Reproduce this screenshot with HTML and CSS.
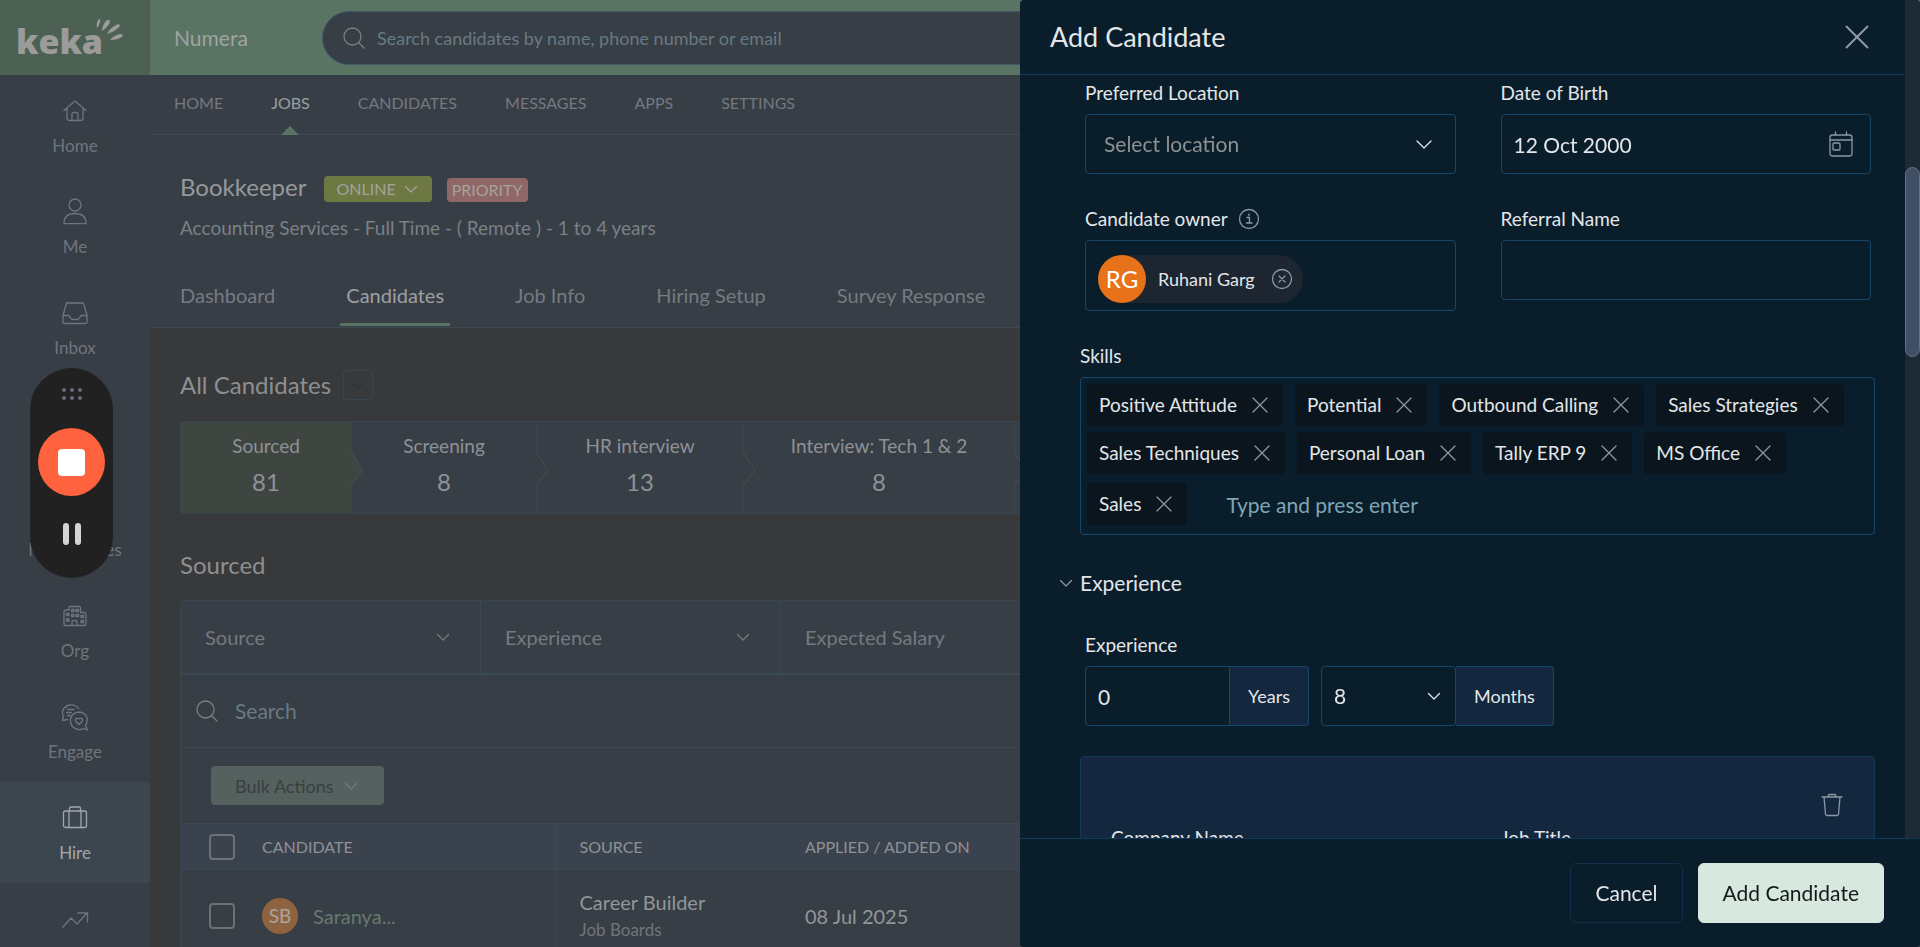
FILE: index.html
```html
<!DOCTYPE html>
<html lang="en">
<head>
    <meta charset="UTF-8">
    <meta name="viewport" content="width=device-width, initial-scale=1.0">
    <title>Add Candidate</title>

    <link rel="stylesheet" href="styles.css">
</head>
<body>
    <svg class="sprite" aria-hidden="true">
        <symbol id="chevron" viewBox="0 0 14 14"><path d="M1.5 4.5 7 10 12.5 4.5"/></symbol>
        <symbol id="chevron-lg" viewBox="0 0 18 18"><path d="M2 6 9 13 16 6"/></symbol>
        <symbol id="cross" viewBox="0 0 16 16"><path d="M1 1 15 15M15 1 1 15"/></symbol>
        <symbol id="search" viewBox="0 0 22 22"><circle cx="9.5" cy="9.5" r="8.5"/><path d="M15.5 15.5 21 21"/></symbol>
    </svg>

    <div class="app">
        <aside class="sidebar">
            <div class="logo">
                <span class="logo-text">keka</span>
                <svg class="logo-rays" width="28" height="24" viewBox="0 0 28 24">
                    <path d="M2 9Q1 3 4 0Q6 0 5 3Q4 7 2 9Z"/>
                    <path d="M7 12Q7 6 12 1Q15 0 15 3Q13 8 7 12Z"/>
                    <path d="M12 15Q15 9 21 6Q25 4 25 7Q21 12 12 15Z"/>
                    <path d="M15 21Q19 16 25 15Q29 15 27 18Q23 21 15 21Z"/>
                </svg>
            </div>
            <nav class="menu">
                <a class="menu-item" href="#">
                    <svg class="icon" width="28" height="28" viewBox="0 0 28 28"><path d="M3 13.5 14 4 25 13.5M6 11.5V21Q6 23.5 8.5 23.5H19.5Q22 23.5 22 21V11.5M11 23V17Q11 15.5 12.5 15.5H15.5Q17 15.5 17 17V23"/></svg>
                    <span>Home</span>
                </a>
                <a class="menu-item" href="#">
                    <svg class="icon" width="28" height="28" viewBox="0 0 28 28"><circle cx="14" cy="7" r="6"/><path d="M3 25.5Q3 15.5 14 15.5T25 25.5Q14 25.7 3 25.5Z"/></svg>
                    <span>Me</span>
                </a>
                <a class="menu-item" href="#">
                    <svg class="icon" width="28" height="28" viewBox="0 0 28 28"><path d="M5.5 4H22.5L26 16.5V23Q26 24.5 24.5 24.5H3.5Q2 24.5 2 23V16.5ZM2 16.5H8Q10 20.5 11.5 20.5H16.5Q18 20.5 20 16.5H26"/></svg>
                    <span>Inbox</span>
                </a>
                <div class="menu-item"></div>
                <a class="menu-item" href="#">
                    <svg class="icon" width="28" height="28" viewBox="0 0 28 28"></svg>
                    <span>My Finances</span>
                </a>
                <a class="menu-item" href="#">
                    <svg class="icon" width="28" height="28" viewBox="0 0 28 28"><path d="M8 8V6Q8 4.5 9.5 4.5H18Q19.5 4.5 19.5 6V10.5H23Q25 10.5 25 12.5V22Q25 23.5 23.5 23.5H4.5Q3 23.5 3 22V10Q3 8 5 8H8M11 23V20Q11 18.5 12.5 18.5H14.5Q16 18.5 16 20V23M10.5 7.5H13V9.5H10.5ZM15 7.5H17.5V9.5H15ZM10.5 12.5H13V14.5H10.5ZM15 12.5H17.5V14.5H15ZM5.5 11.5H8V13.5H5.5ZM5.5 17H8V19H5.5ZM20 13.5H22.5V15.5H20ZM20 18.5H22.5V20.5H20Z"/></svg>
                    <span>Org</span>
                </a>
                <a class="menu-item" href="#">
                    <svg class="icon" width="28" height="28" viewBox="0 0 28 28"><path d="M17.5 5.5Q14 1 8.5 2Q1 4 1.5 11Q1.6 12 2.5 13.5L1.5 17.5 6.5 16.5M6.5 6.5H13M5.5 9.5H10.5M6.5 12.5H9M24.5 22.5Q27.5 17.5 25.5 13.5T18 9Q11 9.5 9.5 16Q9 25 17 26.5Q20 27 22.5 25.5L26.5 27Z"/><path d="M18 21.5 14.5 18Q14 14.5 18 15.5Q22 14.5 21.5 18Z"/></svg>
                    <span>Engage</span>
                </a>
                <a class="menu-item active" href="#">
                    <svg class="icon" width="28" height="28" viewBox="0 0 28 28"><rect x="2.5" y="7" width="23" height="16.5" rx="2"/><path d="M8.5 7V4.5Q8.5 3 10 3H18Q19.5 3 19.5 4.5V7M8 7V23.5M20 7V23.5"/></svg>
                    <span>Hire</span>
                </a>
                <a class="menu-item" href="#">
                    <svg class="icon" width="28" height="28" viewBox="0 0 28 28"><path d="M2 22 10 13 16 19 26 8M17 8H26.5V17"/></svg>
                </a>
            </nav>
        </aside>

        <div class="page">
            <header class="topbar">
                <span class="company">Numera</span>
                <div class="global-search">
                    <svg class="icon" width="22" height="22"><use href="#search"/></svg>
                    <input type="text" aria-label="Search candidates" placeholder="Search candidates by name, phone number or email">
                </div>
            </header>

            <nav class="nav">
                <a href="#">HOME</a>
                <a href="#" class="active">JOBS</a>
                <a href="#">CANDIDATES</a>
                <a href="#">MESSAGES</a>
                <a href="#">APPS</a>
                <a href="#">SETTINGS</a>
            </nav>

            <section class="job">
                <div class="job-title">
                    <h1>Bookkeeper</h1>
                    <button class="badge online">ONLINE <svg class="icon" width="14" height="14"><use href="#chevron"/></svg></button>
                    <span class="badge priority">PRIORITY</span>
                </div>
                <p class="job-desc">Accounting Services - Full Time - ( Remote ) - 1 to 4 years</p>
                <nav class="tabs">
                    <a href="#">Dashboard</a>
                    <a href="#" class="active">Candidates</a>
                    <a href="#">Job Info</a>
                    <a href="#">Hiring Setup</a>
                    <a href="#">Survey Response</a>
                </nav>
            </section>

            <main class="content">
                <div class="heading">
                    <h2>All Candidates</h2>
                    <button class="more" aria-label="Choose list"><svg class="icon" width="14" height="14"><use href="#chevron"/></svg></button>
                </div>

                <div class="stages">
                    <div class="stage w1 active"><span>Sourced</span><b>81</b><svg width="13" height="36" viewBox="0 0 13 36"><path d="M0 1 12 19 0 35"/></svg></div>
                    <div class="stage w2"><span>Screening</span><b>8</b><svg width="13" height="36" viewBox="0 0 13 36"><path d="M0 1 12 19 0 35"/></svg></div>
                    <div class="stage w3"><span>HR interview</span><b>13</b><svg width="13" height="36" viewBox="0 0 13 36"><path d="M0 1 12 19 0 35"/></svg></div>
                    <div class="stage w4"><span>Interview: Tech 1 &amp; 2</span><b>8</b><svg width="13" height="36" viewBox="0 0 13 36"><path d="M0 1 12 19 0 35"/></svg></div>
                    <div class="stage rest"></div>
                </div>

                <h2 class="list-title">Sourced</h2>

                <div class="list">
                    <div class="filters">
                        <button class="filter">Source <svg class="icon" width="14" height="14"><use href="#chevron"/></svg></button>
                        <button class="filter">Experience <svg class="icon" width="14" height="14"><use href="#chevron"/></svg></button>
                        <button class="filter">Expected Salary</button>
                    </div>
                    <div class="list-search">
                        <svg class="icon" width="22" height="22"><use href="#search"/></svg>
                        <input type="text" aria-label="Search" placeholder="Search">
                    </div>
                    <div class="bulk">
                        <button class="bulk-btn">Bulk Actions <svg class="icon" width="14" height="14"><use href="#chevron"/></svg></button>
                    </div>
                    <table class="table">
                        <thead>
                            <tr>
                                <th class="col-check"><input type="checkbox" aria-label="Select all"></th>
                                <th class="col-name">CANDIDATE</th>
                                <th class="col-source">SOURCE</th>
                                <th>APPLIED / ADDED ON</th>
                            </tr>
                        </thead>
                        <tbody>
                            <tr>
                                <td class="col-check"><input type="checkbox" aria-label="Select Saranya"></td>
                                <td class="col-name"><div class="person"><span class="avatar">SB</span><a href="#">Saranya...</a></div></td>
                                <td class="col-source"><p>Career Builder</p><small>Job Boards</small></td>
                                <td>08 Jul 2025</td>
                            </tr>
                        </tbody>
                    </table>
                </div>
            </main>
        </div>
    </div>

    <div class="recorder">
        <svg width="20" height="12" viewBox="0 0 20 12" fill="#6b6880"><circle cx="2" cy="2" r="2"/><circle cx="10" cy="2" r="2"/><circle cx="18" cy="2" r="2"/><circle cx="2" cy="10" r="2"/><circle cx="10" cy="10" r="2"/><circle cx="18" cy="10" r="2"/></svg>
        <button class="stop" aria-label="Stop"><i></i></button>
        <button class="pause" aria-label="Pause"><i></i><i></i></button>
    </div>

    <div class="drawer">
        <div class="drawer-main">
            <div class="drawer-scroll">
                <div class="drawer-header">
                    <h2>Add Candidate</h2>
                    <button class="close" aria-label="Close"><svg class="icon" width="24" height="24"><use href="#cross"/></svg></button>
                </div>
                <form class="form">
                    <div class="row">
                        <div class="field">
                            <label for="location">Preferred Location</label>
                            <div class="control">
                                <select id="location" class="input placeholder"><option>Select location</option></select>
                                <svg class="icon arrow" width="18" height="18"><use href="#chevron-lg"/></svg>
                            </div>
                        </div>
                        <div class="field">
                            <label for="dob">Date of Birth</label>
                            <div class="control">
                                <input id="dob" class="input" type="text" value="12 Oct 2000">
                                <svg class="icon calendar" width="24" height="26" viewBox="0 0 24 26"><rect x="1" y="4" width="22" height="21" rx="2.5"/><path d="M1 9H23M6.5 1V4M17.5 1V4"/><rect x="4" y="12" width="7" height="7" rx="1"/></svg>
                            </div>
                        </div>
                    </div>
                    <div class="row">
                        <div class="field">
                            <label for="owner">Candidate owner <svg class="icon" width="22" height="22" viewBox="0 0 22 22"><circle cx="11" cy="11" r="9.5"/><path d="M9 9.5H11.5V15M8.5 15H14M11 6V7.5"/></svg></label>
                            <div class="owner-box">
                                <div class="owner">
                                    <span class="avatar">RG</span>
                                    <span>Ruhani Garg</span>
                                    <button type="button" id="owner" aria-label="Remove owner"><svg class="icon" width="22" height="22" viewBox="0 0 22 22"><circle cx="11" cy="11" r="9.5"/><path d="M8 8 14 14M14 8 8 14"/></svg></button>
                                </div>
                            </div>
                        </div>
                        <div class="field">
                            <label for="referral">Referral Name</label>
                            <input id="referral" class="input" type="text">
                        </div>
                    </div>

                    <div class="field skills">
                        <label for="skill">Skills</label>
                        <div class="chips">
                            <span class="chip">Positive Attitude <button type="button" aria-label="Remove"><svg class="icon" width="16" height="16"><use href="#cross"/></svg></button></span>
                            <span class="chip">Potential <button type="button" aria-label="Remove"><svg class="icon" width="16" height="16"><use href="#cross"/></svg></button></span>
                            <span class="chip">Outbound Calling <button type="button" aria-label="Remove"><svg class="icon" width="16" height="16"><use href="#cross"/></svg></button></span>
                            <span class="chip">Sales Strategies <button type="button" aria-label="Remove"><svg class="icon" width="16" height="16"><use href="#cross"/></svg></button></span>
                            <span class="chip">Sales Techniques <button type="button" aria-label="Remove"><svg class="icon" width="16" height="16"><use href="#cross"/></svg></button></span>
                            <span class="chip">Personal Loan <button type="button" aria-label="Remove"><svg class="icon" width="16" height="16"><use href="#cross"/></svg></button></span>
                            <span class="chip">Tally ERP 9 <button type="button" aria-label="Remove"><svg class="icon" width="16" height="16"><use href="#cross"/></svg></button></span>
                            <span class="chip">MS Office <button type="button" aria-label="Remove"><svg class="icon" width="16" height="16"><use href="#cross"/></svg></button></span>
                            <span class="chip">Sales <button type="button" aria-label="Remove"><svg class="icon" width="16" height="16"><use href="#cross"/></svg></button></span>
                            <input id="skill" class="chip-input" type="text" placeholder="Type and press enter">
                        </div>
                    </div>

                    <h3 class="section"><svg class="icon" width="14" height="14"><use href="#chevron"/></svg>Experience</h3>

                    <div class="field experience">
                        <label for="years">Experience</label>
                        <div class="periods">
                            <div class="group years">
                                <input id="years" class="input" type="text" value="0">
                                <span class="addon">Years</span>
                            </div>
                            <div class="group months">
                                <div class="control">
                                    <select class="input" aria-label="Months"><option>8</option></select>
                                    <svg class="icon arrow" width="14" height="14"><use href="#chevron"/></svg>
                                </div>
                                <span class="addon">Months</span>
                            </div>
                        </div>
                    </div>

                    <div class="card">
                        <button type="button" class="trash" aria-label="Delete"><svg class="icon" width="22" height="24" viewBox="0 0 22 24"><path d="M1 4H21M3 4 4.5 21Q4.6 22.5 6 22.5H16Q17.4 22.5 17.5 21L19 4M7 4Q7 1.5 9 1.5H13Q15 1.5 15 4"/></svg></button>
                        <div class="row">
                            <div class="field"><label for="company-name">Company Name</label><input id="company-name" class="input" type="text"></div>
                            <div class="field"><label for="job-title">Job Title</label><input id="job-title" class="input" type="text"></div>
                        </div>
                    </div>
                </form>
            </div>
            <div class="scrollbar"><div class="thumb"></div></div>
        </div>
        <div class="drawer-footer">
            <button class="btn">Cancel</button>
            <button class="btn primary">Add Candidate</button>
        </div>
    </div>
</body>
</html>
```
FILE: styles.css
```css
* {
    box-sizing: border-box;
}
body {
    margin: 0;
    height: 100vh;
    overflow: hidden;
    background-color: #37393b;
    color: #8e9196;
    font-family: Lato, "Liberation Sans", sans-serif;
    font-size: 20px;
    line-height: 24px;
}
h1, h2, h3, p {
    margin: 0;
    font-weight: 400;
}
a {
    color: inherit;
    text-decoration: none;
}
button, input, select {
    margin: 0;
    padding: 0;
    border: 0;
    background: none;
    color: inherit;
    font: inherit;
    outline: none;
}
input {
    min-width: 0;
}
.sprite {
    display: none;
}
.icon {
    display: block;
    flex-shrink: 0;
    fill: none;
    stroke: currentColor;
    stroke-width: 1.3;
    stroke-linecap: round;
    stroke-linejoin: round;
}
.app {
    display: flex;
    height: 100vh;
    overflow: hidden;
}

/* sidebar */
.sidebar {
    flex: 0 0 150px;
    background-color: #383e46;
    overflow: hidden;
}
.logo {
    display: flex;
    height: 75px;
    padding: 19px 0 0 16px;
    background-color: #4c6154;
    color: #9b9b9b;
}
.logo-text {
    font-family: "Open Sans", sans-serif;
    font-size: 34px;
    font-weight: 800;
    line-height: 44px;
}
.logo-rays {
    margin-left: -8px;
    fill: #9b9b9b;
}
.menu-item {
    display: flex;
    flex-direction: column;
    align-items: center;
    height: 101px;
    padding-top: 22px;
    font-size: 17px;
    line-height: 20px;
    gap: 11px;
    color: #6f757d;
}
.menu-item.active {
    background-color: #3b464f;
    color: #a3a6a9;
}

/* page */
.page {
    flex: 1;
    min-width: 0;
    display: flex;
    flex-direction: column;
}
.topbar {
    display: flex;
    align-items: center;
    flex-shrink: 0;
    height: 75px;
    padding-left: 24px;
    background-color: #597462;
}
.company {
    width: 148px;
    font-size: 21px;
    color: #a0a3a3;
}
.global-search {
    display: flex;
    align-items: center;
    gap: 12px;
    width: 1000px;
    height: 54px;
    padding: 0 20px;
    border: 1px solid #41566a;
    border-radius: 27px;
    background-color: #383e46;
    color: #7b8086;
    font-size: 18px;
}
.global-search input {
    flex: 1;
}
.global-search input::placeholder,
.list-search input::placeholder {
    color: #677a83;
    opacity: 1;
}
.nav {
    display: flex;
    flex-shrink: 0;
    gap: 48px;
    height: 60px;
    padding: 0 24px;
    border-bottom: 1px solid #3c4a56;
    background-color: #383e46;
    color: #747980;
    font-size: 16px;
    line-height: 56px;
}
.nav .active {
    position: relative;
    color: #9b9ea1;
}
.nav .active::after {
    content: '';
    position: absolute;
    left: 50%;
    bottom: -1px;
    margin-left: -9px;
    border: 9px solid transparent;
    border-top: 0;
    border-bottom-color: #597462;
}
.job {
    flex-shrink: 0;
    padding: 39px 30px 0;
    border-bottom: 1px solid #3c4a56;
    background-color: #383e46;
}
.job-title {
    display: flex;
    align-items: flex-end;
    height: 28px;
}
.job-title h1 {
    margin-right: 18px;
    font-size: 24px;
    line-height: 30px;
    color: #96999b;
}
.badge {
    display: flex;
    align-items: center;
    height: 26px;
    border-radius: 4px;
    font-size: 16px;
    line-height: 24px;
    color: #a3a39b;
}
.badge.online {
    gap: 8px;
    margin-right: 15px;
    padding: 0 14px 0 12px;
    background-color: #6d7843;
}
.badge.priority {
    height: 24px;
    padding: 0 5px;
    background-color: #906768;
}
.job-desc {
    margin-top: 14px;
    font-size: 19px;
    color: #7b8086;
}
.tabs {
    display: flex;
    gap: 59px;
    height: 61px;
    margin: 26px -6px 0;
    padding-bottom: 1px;
    color: #757b82;
}
.tabs a {
    padding: 17px 6px 0;
}
.tabs .active {
    color: #9da0a2;
    border-bottom: 3px solid #597462;
}

/* candidates */
.content {
    flex: 1;
    padding: 42px 30px 0;
}
.content h2 {
    font-size: 24px;
    line-height: 30px;
    color: #8d8f91;
}
.heading {
    display: flex;
    align-items: center;
    gap: 12px;
    height: 30px;
}
.more {
    display: flex;
    align-items: center;
    justify-content: center;
    width: 30px;
    height: 30px;
    border: 1px solid #364753;
    border-radius: 4px;
    color: #303234;
}
.stages {
    display: flex;
    height: 93px;
    margin-top: 21px;
    border: 1px solid #364753;
    border-radius: 4px;
    background-color: #383e46;
}
.stage {
    position: relative;
    display: flex;
    flex-direction: column;
    align-items: center;
    gap: 12px;
    padding-top: 12px;
    border-right: 1px solid #364753;
    font-size: 19px;
    white-space: nowrap;
}
.stage b {
    font-size: 24px;
    font-weight: 400;
}
.stage svg {
    position: absolute;
    z-index: 1;
    top: 29px;
    right: -13px;
    fill: #383e46;
    stroke: #4a4d53;
}
.stage.active {
    background-color: #3f4642;
}
.stage.active svg {
    fill: #3f4642;
}
.w1 {
    flex: 0 0 171px;
}
.w2 {
    flex: 0 0 185px;
}
.w3 {
    flex: 0 0 207px;
}
.w4 {
    flex: 0 0 271px;
}
.rest {
    flex: 1;
    border: 0;
}
.content .list-title {
    margin: 36px 0 20px;
}
.list {
    border: 1px solid #364753;
    border-radius: 4px;
    background-color: #383e46;
}
.filters {
    display: flex;
    height: 74px;
    border-bottom: 2px solid #3b4953;
}
.filter {
    display: flex;
    align-items: center;
    justify-content: space-between;
    flex: 0 0 300px;
    padding: 0 30px 0 24px;
    border-right: 1px solid #3b4953;
    color: #747980;
}
.list-search {
    display: flex;
    align-items: center;
    gap: 17px;
    height: 73px;
    padding: 0 15px;
    border-bottom: 1px solid #3b4953;
    color: #7b8086;
    font-size: 21px;
}
.bulk {
    height: 75px;
    padding: 18px 30px;
}
.bulk-btn {
    display: flex;
    align-items: center;
    gap: 10px;
    height: 39px;
    padding: 0 26px 0 24px;
    border-radius: 4px;
    background-color: #54615f;
    color: #393f40;
    font-size: 18px;
}
.bulk-btn .icon {
    color: #707a7a;
}
.table {
    width: 100%;
    border-collapse: collapse;
    text-align: left;
}
.table th {
    height: 46px;
    padding: 0;
    border-top: 1px solid #3b4953;
    border-bottom: 1px solid #3b4953;
    background-color: #3a434d;
    font-size: 16px;
    font-weight: 400;
}
.table td {
    height: 92px;
    padding: 0;
    color: #939699;
}
.table .col-check {
    width: 81px;
    padding-left: 28px;
}
.table .col-name {
    width: 293px;
    border-right: 1px solid #3b4953;
}
.table .col-source {
    width: 250px;
    padding-left: 24px;
}
.table small {
    display: block;
    padding-top: 4px;
    font-size: 17px;
    color: #70757c;
}
.table input {
    display: block;
    appearance: none;
    width: 26px;
    height: 26px;
    border: 2px solid #6c7077;
    border-radius: 4px;
}
.person {
    display: flex;
    align-items: center;
    gap: 15px;
    color: #647a6c;
}
.avatar {
    display: flex;
    align-items: center;
    justify-content: center;
    width: 36px;
    height: 36px;
    border-radius: 50%;
    background-color: #8f6340;
    color: #a9a5a1;
    font-size: 19px;
}

/* screen recorder */
.recorder {
    position: fixed;
    z-index: 5;
    left: 30px;
    top: 368px;
    display: flex;
    flex-direction: column;
    align-items: center;
    width: 83px;
    height: 210px;
    padding-top: 20px;
    border-radius: 42px;
    background-color: #212121;
}
.recorder .stop {
    display: flex;
    align-items: center;
    justify-content: center;
    width: 67px;
    height: 68px;
    margin: 28px 0 27px;
    border-radius: 50%;
    background-color: #ff623e;
}
.stop i {
    width: 27px;
    height: 27px;
    border-radius: 4px;
    background-color: #fff;
}
.pause {
    display: flex;
    gap: 6px;
}
.pause i {
    width: 6px;
    height: 22px;
    border-radius: 3px;
    background-color: #d4d4d4;
}

/* drawer */
.drawer {
    position: fixed;
    z-index: 10;
    top: 0;
    right: 0;
    bottom: 0;
    display: flex;
    flex-direction: column;
    width: 900px;
    max-width: 100%;
    border-radius: 4px;
    overflow: hidden;
    background-color: #0a1d2b;
    color: #e3e6e8;
}
.drawer-main {
    display: flex;
    flex: 1;
    min-height: 0;
}
.drawer-scroll {
    flex: 1;
    overflow: hidden;
}
.scrollbar {
    width: 15px;
    padding-top: 167px;
    background-color: #1e2936;
}
.thumb {
    height: 190px;
    border: 1px solid #66707e;
    border-radius: 8px;
    background-color: #404f65;
}
.drawer-header {
    display: flex;
    align-items: center;
    justify-content: space-between;
    height: 75px;
    padding: 0 36px 0 30px;
    border-bottom: 1px solid #12395a;
}
.drawer-header h2 {
    font-size: 27px;
    line-height: 34px;
}
.close {
    color: #929ba5;
}
.form {
    padding: 7px 30px 0 60px;
}
.row {
    display: grid;
    grid-template-columns: 1fr 1fr;
    gap: 45px;
    margin: 0 4px 34px 5px;
}
.field label {
    display: flex;
    align-items: center;
    gap: 10px;
    height: 22px;
    margin-bottom: 10px;
    font-size: 19px;
}
.field label .icon {
    color: #8c97a4;
}
.control {
    position: relative;
}
.input {
    display: block;
    width: 100%;
    height: 60px;
    padding: 0 12px;
    border: 1px solid #16466b;
    border-radius: 4px;
    appearance: none;
    font-size: 21px;
}
.placeholder {
    padding: 0 18px;
    color: #8f9192;
}
.control .icon {
    position: absolute;
    pointer-events: none;
}
.control .arrow {
    top: 21px;
    right: 23px;
}
.control .calendar {
    top: 17px;
    right: 18px;
    color: #8c97a4;
}
.owner-box {
    height: 71px;
    padding: 14px 12px;
    border: 1px solid #16466b;
    border-radius: 4px;
}
.owner {
    display: inline-flex;
    align-items: center;
    gap: 12px;
    height: 48px;
    padding-right: 10px;
    border-radius: 24px;
    background-color: #1c2530;
    font-size: 18px;
}
.owner .avatar {
    width: 48px;
    height: 48px;
    background-color: #e87219;
    color: #fff;
    font-size: 24px;
}
.owner button {
    margin-left: 4px;
    color: #8c97a4;
}
.chips {
    display: flex;
    flex-wrap: wrap;
    align-items: center;
    gap: 6px 12px;
    padding: 6px;
    border: 1px solid #16466b;
    border-radius: 4px;
}
.chip {
    display: flex;
    align-items: center;
    gap: 15px;
    height: 42px;
    padding: 0 15px 0 12px;
    border-radius: 4px;
    background-color: #0b151d;
    font-size: 19px;
}
.chip button {
    color: #8c97a4;
}
.chip-input {
    flex: 1;
    height: 48px;
    padding-left: 27px;
    font-size: 21px;
}
.chip-input::placeholder {
    color: #7fa5b5;
    opacity: 1;
}
.section {
    display: flex;
    align-items: center;
    gap: 7px;
    margin: 36px 0 39px -21px;
    font-size: 21px;
}
.section .icon {
    color: #8c97a4;
}
.experience {
    margin: 0 5px;
}
.periods {
    display: flex;
    gap: 12px;
}
.group {
    display: flex;
}
.years .input {
    width: 145px;
    border-radius: 4px 0 0 4px;
}
.months .input {
    width: 135px;
}
.months .arrow {
    top: 23px;
    right: 15px;
}
.addon {
    display: flex;
    align-items: center;
    height: 60px;
    padding: 0 18px;
    border: 1px solid #16466b;
    border-left: 0;
    border-radius: 0 4px 4px 0;
    background-color: #13283f;
    font-size: 18px;
}
.card {
    margin-top: 30px;
    padding: 36px 25px 0;
    border: 1px solid #12395a;
    border-radius: 4px;
    background-color: #13283f;
}
.trash {
    display: block;
    margin: 0 6px 10px auto;
    color: #8c97a4;
}
.drawer-footer {
    display: flex;
    gap: 15px;
    justify-content: flex-end;
    flex-shrink: 0;
    height: 109px;
    padding: 24px 36px;
    border-top: 1px solid #12395a;
}
.btn {
    height: 60px;
    padding: 0 24px;
    border: 1px solid #12304a;
    border-radius: 6px;
    font-size: 21px;
}
.btn.primary {
    border-color: #d7e8de;
    background-color: #d7e8de;
    color: #14191c;
}
```
